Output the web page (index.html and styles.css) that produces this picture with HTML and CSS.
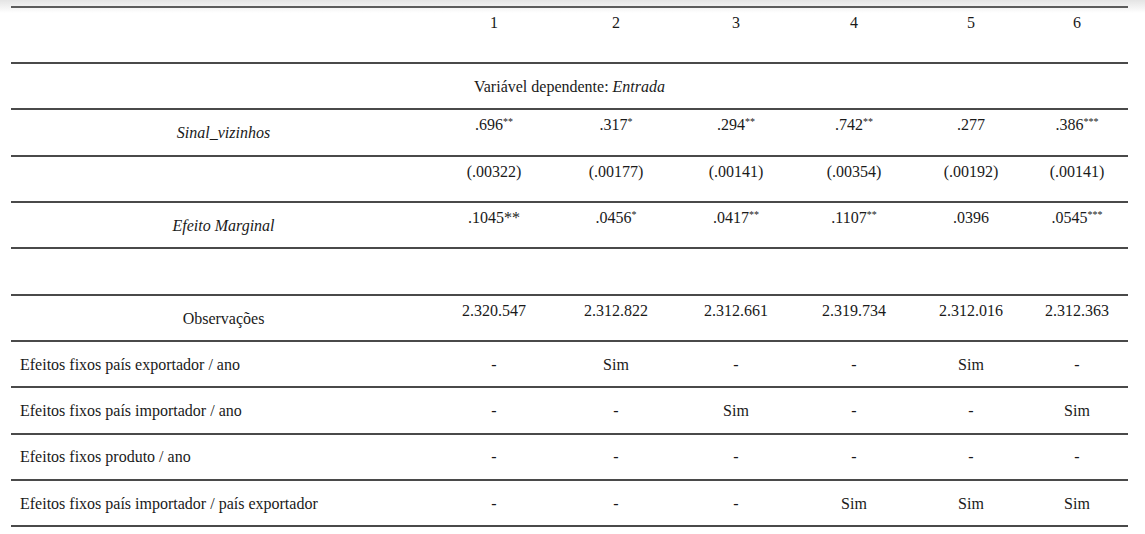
FILE: index.html
```html
<!DOCTYPE html>
<html lang="pt">
<head>
    <meta charset="UTF-8" />
    <meta name="viewport" content="width=device-width, initial-scale=1.0" />
    <title>Resultados</title>
    <link rel="stylesheet" href="styles.css">
</head>
<body>
    <table class="results">
        <colgroup>
            <col class="col-label">
            <col class="col-1">
            <col class="col-2">
            <col class="col-3">
            <col class="col-4">
            <col class="col-5">
            <col class="col-6">
        </colgroup>
        <tr class="head-row">
            <td></td>
            <td>1</td>
            <td>2</td>
            <td>3</td>
            <td>4</td>
            <td>5</td>
            <td>6</td>
        </tr>
        <tr class="span-row">
            <td colspan="7">Variável dependente: <em>Entrada</em></td>
        </tr>
        <tr class="top-row">
            <td class="label"><em>Sinal_vizinhos</em></td>
            <td>.696<sup>**</sup></td>
            <td>.317<sup>*</sup></td>
            <td>.294<sup>**</sup></td>
            <td>.742<sup>**</sup></td>
            <td>.277</td>
            <td>.386<sup>***</sup></td>
        </tr>
        <tr class="top-row">
            <td class="label"></td>
            <td>(.00322)</td>
            <td>(.00177)</td>
            <td>(.00141)</td>
            <td>(.00354)</td>
            <td>(.00192)</td>
            <td>(.00141)</td>
        </tr>
        <tr class="top-row">
            <td class="label"><em>Efeito Marginal</em></td>
            <td>.1045**</td>
            <td>.0456<sup>*</sup></td>
            <td>.0417<sup>**</sup></td>
            <td>.1107<sup>**</sup></td>
            <td>.0396</td>
            <td>.0545<sup>***</sup></td>
        </tr>
        <tr class="top-row">
            <td class="label"></td>
            <td></td>
            <td></td>
            <td></td>
            <td></td>
            <td></td>
            <td></td>
        </tr>
        <tr class="top-row">
            <td class="label">Observações</td>
            <td>2.320.547</td>
            <td>2.312.822</td>
            <td>2.312.661</td>
            <td>2.319.734</td>
            <td>2.312.016</td>
            <td>2.312.363</td>
        </tr>
        <tr class="fe-row">
            <td class="label">Efeitos fixos país exportador / ano</td>
            <td>-</td>
            <td>Sim</td>
            <td>-</td>
            <td>-</td>
            <td>Sim</td>
            <td>-</td>
        </tr>
        <tr class="fe-row">
            <td class="label">Efeitos fixos país importador / ano</td>
            <td>-</td>
            <td>-</td>
            <td>Sim</td>
            <td>-</td>
            <td>-</td>
            <td>Sim</td>
        </tr>
        <tr class="fe-row">
            <td class="label">Efeitos fixos produto / ano</td>
            <td>-</td>
            <td>-</td>
            <td>-</td>
            <td>-</td>
            <td>-</td>
            <td>-</td>
        </tr>
        <tr class="fe-row">
            <td class="label">Efeitos fixos país importador / país exportador</td>
            <td>-</td>
            <td>-</td>
            <td>-</td>
            <td>Sim</td>
            <td>Sim</td>
            <td>Sim</td>
        </tr>
    </table>
</body>
</html>
```

FILE: styles.css
```css
body {
    margin: 0;
    padding: 6px 0 0 11px;
    font-family: "Liberation Serif", "Times New Roman", serif;
    font-size: 16px;
    color: #1a1a1a;
    background: linear-gradient(to bottom, #e4e4e4 0px, #ffffff 13px) no-repeat;
    background-color: #ffffff;
}

.results {
    width: 1117px;
    table-layout: fixed;
    border-collapse: collapse;
    border-top: 2px solid #5c5c5c;
}

.col-label { width: 425px; }
.col-1 { width: 116px; }
.col-2 { width: 128px; }
.col-3 { width: 112px; }
.col-4 { width: 124px; }
.col-5 { width: 110px; }
.col-6 { width: 102px; }

td {
    border-bottom: 2px solid #4a4a4a;
    text-align: center;
    padding: 0;
    line-height: 18px;
    height: 46.33px;
    box-sizing: border-box;
}

em {
    font-style: italic;
}

sup {
    font-size: 10px;
    line-height: 0;
    vertical-align: 5px;
}

/* header row with model numbers */
.head-row td {
    height: 56px;
    vertical-align: top;
    padding-top: 6px;
}

.span-row td {
    vertical-align: middle;
    padding-top: 2px;
}

/* coefficient rows: values sit near the top, labels centered */
.top-row td {
    vertical-align: top;
    padding-top: 6px;
}

.top-row td.label {
    vertical-align: middle;
    padding-top: 2px;
}

/* fixed effects rows */
.fe-row td {
    vertical-align: middle;
    padding-top: 1px;
}

.fe-row td.label {
    text-align: left;
    padding-left: 9px;
}
```
